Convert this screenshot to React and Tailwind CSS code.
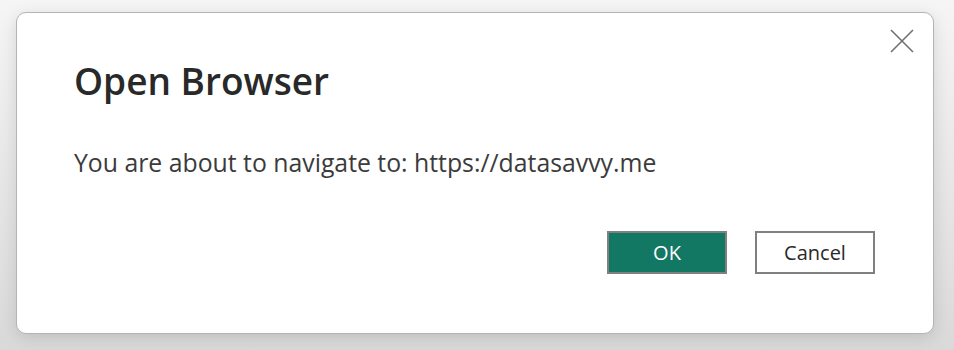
import React from "react";

const CloseIcon = () => (
  <svg width="24" height="24" viewBox="0 0 24 24" fill="none">
    <path d="M1 1L23 23M23 1L1 23" stroke="#707070" strokeWidth="1.6" />
  </svg>
);

export default function App() {
  return (
    <div
      className="w-[954px] h-[350px] bg-gradient-to-b from-[#f5f5f5] to-[#d9d9d9] pt-[12px] pl-[16px]"
      style={{ fontFamily: '"Open Sans", "Noto Sans", sans-serif' }}
    >
      <div className="relative w-[918px] h-[322px] bg-white border border-[#b4b4b4] rounded-[10px] shadow-[0_4px_16px_rgba(0,0,0,0.12)] flex flex-col pl-[57px] pr-[58px]">
        <button className="absolute top-[16px] right-[19px] p-0">
          <CloseIcon />
        </button>
        <h1 className="mt-[44px] text-[37px] leading-[48px] font-semibold text-[#292929]">
          Open Browser
        </h1>
        <p className="mt-[40px] text-[24.8px] leading-[34px] text-[#3b3b3b]">
          You are about to navigate to: https://datasavvy.me
        </p>
        <div className="mt-[52px] flex justify-end gap-[28px]">
          <button className="w-[120px] h-[43px] bg-[#127763] border-2 border-[#808080] text-white text-[20px]">
            OK
          </button>
          <button className="w-[120px] h-[43px] bg-white border-2 border-[#808080] text-[#292929] text-[20px]">
            Cancel
          </button>
        </div>
      </div>
    </div>
  );
}
